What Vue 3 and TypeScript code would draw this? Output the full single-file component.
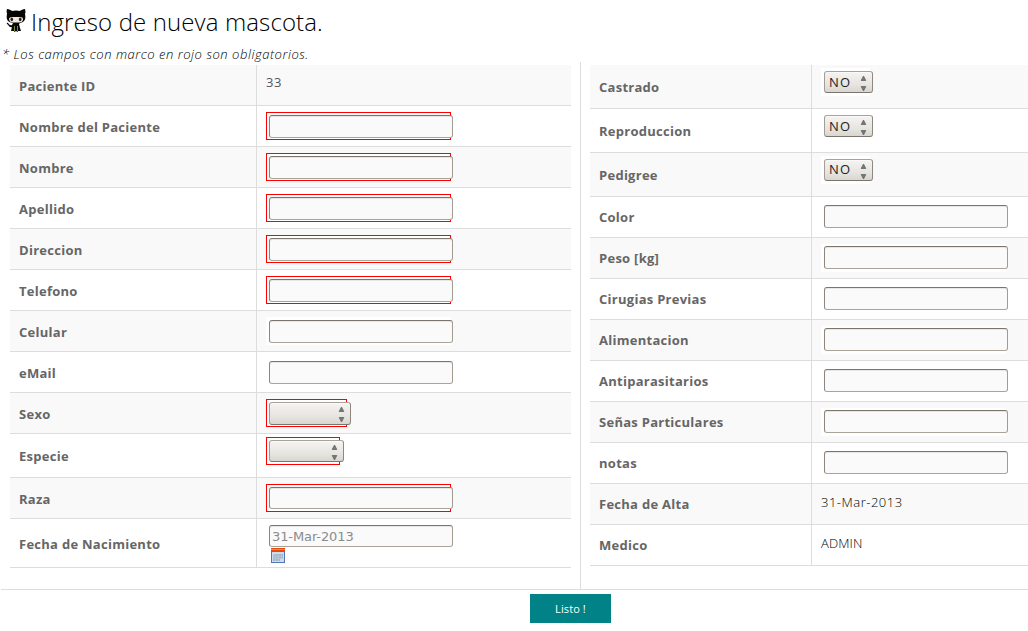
<script setup lang="ts">
import { ref } from 'vue'

type Kind = 'text' | 'select' | 'static' | 'date'

interface Field {
  label: string
  kind: Kind
  value: string
  required?: boolean
  size?: string
  row?: string
}

const text = (label: string, required = false, row = ''): Field => ({ label, kind: 'text', value: '', required, row })

const left = ref<Field[]>([
  { label: 'Paciente ID', kind: 'static', value: '33' },
  text('Nombre del Paciente', true),
  text('Nombre', true),
  text('Apellido', true),
  text('Direccion', true),
  text('Telefono', true),
  text('Celular'),
  text('eMail'),
  { label: 'Sexo', kind: 'select', value: '', required: true, size: 'wide' },
  { label: 'Especie', kind: 'select', value: '', required: true, size: 'medium', row: 'tall' },
  text('Raza', true, 'compact'),
  { label: 'Fecha de Nacimiento', kind: 'date', value: '31-Mar-2013', row: 'dated' },
])

const right = ref<Field[]>([
  { label: 'Castrado', kind: 'select', value: 'NO', size: 'small', row: 'tall' },
  { label: 'Reproduccion', kind: 'select', value: 'NO', size: 'small', row: 'tall' },
  { label: 'Pedigree', kind: 'select', value: 'NO', size: 'small', row: 'tall' },
  text('Color'),
  text('Peso [kg]'),
  text('Cirugias Previas'),
  text('Alimentacion'),
  text('Antiparasitarios'),
  text('Señas Particulares'),
  text('notas'),
  { label: 'Fecha de Alta', kind: 'static', value: '31-Mar-2013' },
  { label: 'Medico', kind: 'static', value: 'ADMIN' },
])
const columns = [
  { name: 'left', fields: left },
  { name: 'right', fields: right },
]
</script>

<template>
  <main class="page">
    <h1 class="title">
      <svg class="cat" viewBox="0 0 20 25" aria-hidden="true">
        <path d="M1 1 C3 1 5 2 6 3 Q10 2 14 3 C15 2 17 1 19 1 Q20 4 19 6 C20 11 19 14 14 15 L13 16 L14 20 L15 23 H12 L11.500 24 L10 23 L8.500 24 L8 23 H5 L6 19 C3 20 3 17 1 16 Q0 14 2 15 Q4 18 6 17 L7 15 C1 14 0 11 1 6 Q0 3 1 1Z" fill="#050505" />
        <path d="M3 10.500 Q4 8.500 7 9 H13 Q17 8.500 17 11 Q17 14.500 13 14.500 H7 Q3 14.500 3 10.500Z" fill="#f3e6dd" />
        <ellipse cx="5.800" cy="11.300" rx="1.300" ry="1.900" fill="#222" />
        <ellipse cx="14.200" cy="11.300" rx="1.300" ry="1.900" fill="#222" />
        <path d="M8.500 18V23 M11.500 18V23" stroke="#9ba84d" stroke-width=".8" />
      </svg>
      <span>Ingreso de nueva mascota.</span>
    </h1>
    <p class="note">* Los campos con marco en rojo son obligatorios.</p>
    <form class="form" @submit.prevent>
      <section v-for="column in columns" :key="column.name" :class="['column', column.name]">
        <div v-for="field in column.fields.value" :key="field.label" :class="['row', field.row]">
          <label class="label">{{ field.label }}</label>
          <div class="cell">
            <span v-if="field.kind === 'static'" class="static">{{ field.value }}</span>
            <div v-else :class="['frame', field.kind, field.size, { required: field.required }]">
              <div v-if="field.kind === 'select'" class="picker">
                <select v-model="field.value" :aria-label="field.label">
                  <option :value="field.value">{{ field.value }}</option>
                </select>
                <svg class="arrows" viewBox="0 0 7 17" aria-hidden="true">
                  <path d="M3.500 1L5.800 5.500H1.200Z M1.200 11.500H5.800L3.500 16Z" fill="#777" stroke="#666" stroke-width=".8" />
                </svg>
              </div>
              <input v-else v-model="field.value" type="text" :disabled="field.kind === 'date'" :aria-label="field.label">
            </div>
            <svg v-if="field.kind === 'date'" class="calendar" viewBox="0 0 14 15" aria-hidden="true">
              <rect width="14" height="15" fill="#5375ba" />
              <rect x="1" y="4" width="12" height="10" fill="#c8dcf2" />
              <rect width="14" height="4" fill="#e8490b" />
              <rect y="1" width="14" height="1" fill="#ff8b3d" />
              <path d="M3 6H12V11H9V13H2V7H3Z" fill="#aab6c4" />
              <path d="M2 8.500H12 M2 10.500H12 M4.500 6V13 M7.500 6V13 M10.500 6V11" stroke="#c3d0de" stroke-width=".5" />
            </svg>
          </div>
        </div>
      </section>
    </form>
    <footer class="footer"><button class="submit" type="button">Listo !</button></footer>
  </main>
</template>

<style>
body { margin: 0; background: #fff; overflow: hidden; }
</style>

<style scoped>
* { box-sizing: border-box; }
.page { width: 1028px; height: 631px; overflow: hidden; font-family: "Open Sans", sans-serif; color: #333; }
.title { height: 46px; margin: 0; padding: 6px 0 0 6px; display: flex; gap: 5px; color: #000; font-size: 24px; line-height: 31px; font-weight: 300; letter-spacing: .12px; white-space: nowrap; }
.cat { width: 20px; height: 25px; margin-top: 2px; flex: none; }
.note { margin: 0; height: 16px; padding-left: 2px; font-size: 13px; line-height: 17px; font-style: italic; font-weight: 300; letter-spacing: .54px; color: #000; white-space: nowrap; }
.form { height: 528px; margin-left: 1px; display: grid; grid-template-columns: 580px 447px; border-bottom: 1px solid #ddd; }
.column { padding-top: 3px; }
.left { padding-left: 9px; padding-right: 9px; border-right: 1px solid #ddd; }
.right { padding-left: 9px; }
.row { height: 41px; display: grid; grid-template-columns: 246px 1fr; border-bottom: 1px solid #ddd; }
.right .row { grid-template-columns: 221px 1fr; }
.row:nth-child(odd) { background: #f9f9f9; }
.row.tall { height: 44px; }
.row.dated { height: 49px; }
.label { align-self: center; padding: 2px 0 0 9px; font-size: 13px; line-height: 18px; font-weight: 700; letter-spacing: .27px; color: #666; white-space: nowrap; }
.right .label, .tall .label { padding-top: 0; }
.cell { border-left: 1px solid #ddd; padding: 6px 0 0 9px; }
.tall .cell { padding-top: 3px; }
.dated .cell { padding-top: 3px; }
.static { display: block; font-size: 13px; line-height: 18px; margin-top: 3px; font-weight: 300; letter-spacing: .5px; color: #000; }
.right .row:last-child .static { letter-spacing: .1px; }
.left .static { margin-top: 2px; font-weight: 400; color: #555; }
.frame { width: 185px; height: 28px; border: 1px solid transparent; padding: 2px; background: #fff; }
.frame.required { border-color: #f00; }
.right .frame.text { padding-top: 1px; }
.wide { width: 81px; }
.medium { width: 74px; }
.small { width: 49px; }
input, select { display: block; margin: 0; appearance: none; outline: 0; border: 1px solid; border-radius: 3px; }
input { width: 184px; height: 23px; padding: 0 2px; border-color: #7d756b #a29b91 #aaa398 #8e867c; background: #fafafa; box-shadow: inset 0 1px #e8e7e5; }
.compact input, .dated input { height: 22px; }
input:disabled { color: #8b8b8b; font: 13px "DejaVu Sans", sans-serif; letter-spacing: -.1px; opacity: 1; }
.date { height: 26px; background: transparent; }
.picker { position: relative; width: 82px; height: 23px; }
.medium .picker { width: 75px; height: 22px; }
.small .picker { width: 49px; height: 22px; }
select { width: 100%; height: 100%; padding: 0 0 1px 4px; border-color: #a8a29b #8e8880 #7c756d #a39d96; background: linear-gradient(#f5f4f2, #e6e4e0 65%, #d9d6d1); color: #222; font: 13px "Open Sans", sans-serif; letter-spacing: 1.3px; box-shadow: inset 0 1px #fff8; }
.right .row:nth-child(3) select { padding-bottom: 3px; }
.arrows { position: absolute; right: 6px; top: 4px; width: 7px; height: 17px; pointer-events: none; }
.calendar { display: block; width: 14px; height: 15px; margin-left: 5px; }
.footer { display: flex; padding: 4px 0 0 530px; }
.submit { width: 81px; height: 29px; padding: 0; border: 0; background: #008287; color: #fff; font: 400 11px "Open Sans", sans-serif; letter-spacing: .1px; }
</style>
